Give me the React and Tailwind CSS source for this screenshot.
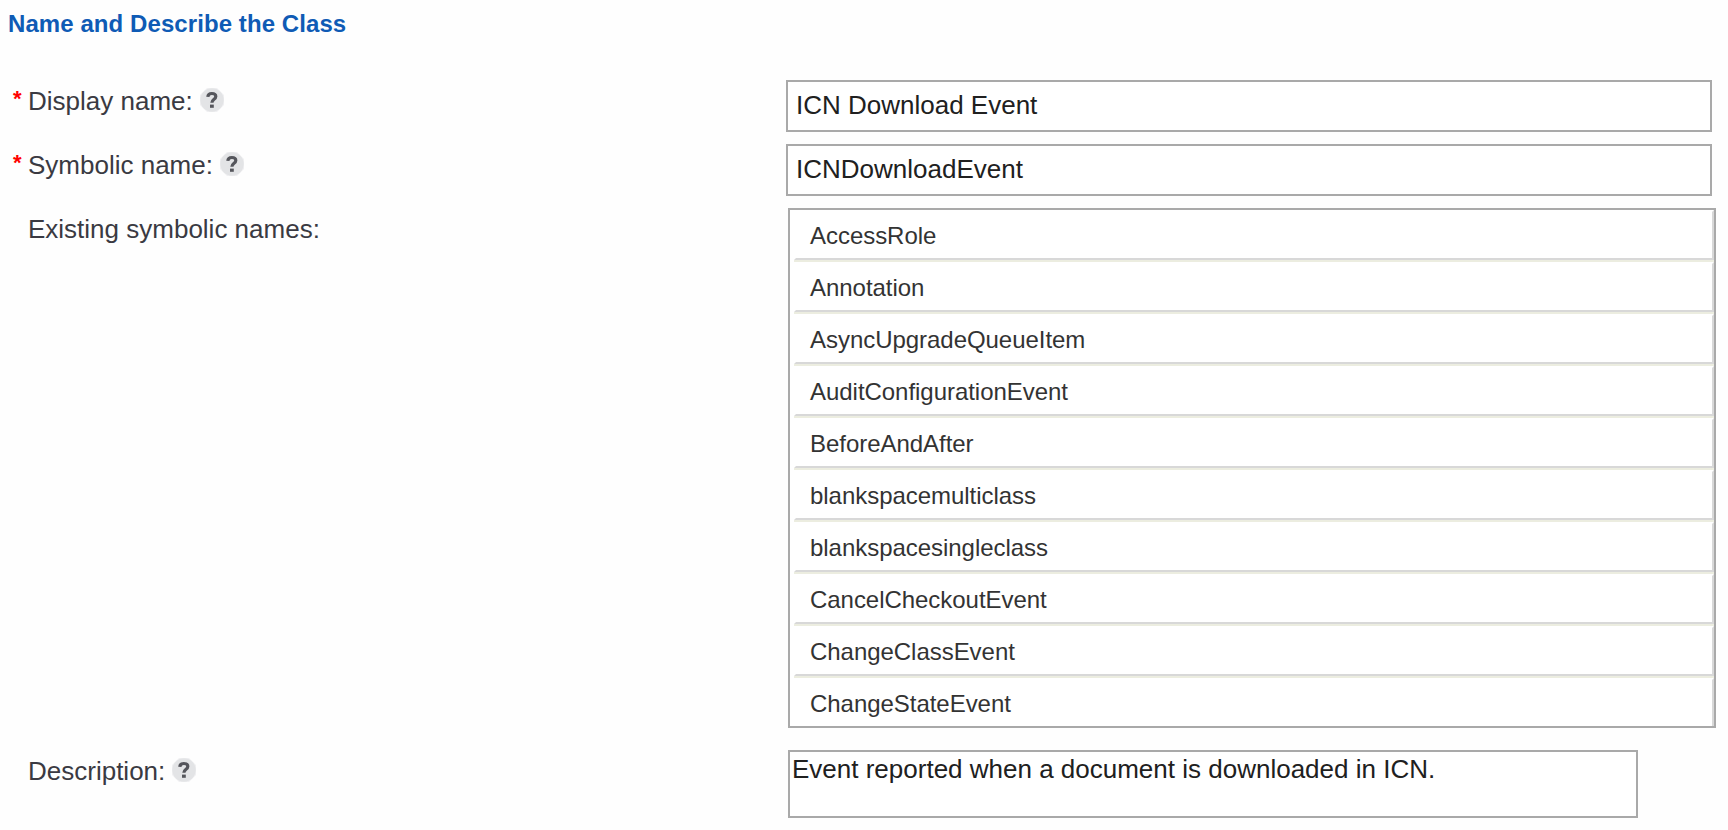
const names = [
  "AccessRole",
  "Annotation",
  "AsyncUpgradeQueueItem",
  "AuditConfigurationEvent",
  "BeforeAndAfter",
  "blankspacemulticlass",
  "blankspacesingleclass",
  "CancelCheckoutEvent",
  "ChangeClassEvent",
  "ChangeStateEvent",
];

function HelpIcon() {
  return (
    <svg viewBox="0 0 24 24" className="ml-[7px] mt-[2px] h-6 w-6 shrink-0">
      <path d="M7 0h10l7 7v10l-7 7H7l-7-7V7z" fill="#f0f0f2" />
      <circle cx="12" cy="12" r="11.700" fill="#e3e4e6" />
      <path
        d="M7.800 8.800C8 6.600 9.400 5.500 11.800 5.500c2.500 0 4 1.100 4 3 0 2.900-3.900 2.700-3.900 6.300"
        fill="none"
        stroke="#55565c"
        strokeWidth="3.200"
      />
      <rect x="10" y="16.600" width="3.800" height="3.200" fill="#55565c" />
    </svg>
  );
}

function Label({ text, required, help }) {
  return (
    <div className="flex h-[30px] w-[788px] shrink-0 items-start pl-[13px]">
      <span className="-mt-[2px] w-[15px] shrink-0 text-[22px] leading-[30px] font-bold text-[#ff0000]">{required ? "*" : ""}</span>
      <span className="whitespace-nowrap text-[26px] leading-[30px] text-[#3a3a42]">{text}</span>
      {help && <HelpIcon />}
    </div>
  );
}

function TextField({ value }) {
  return (
    <input
      readOnly
      defaultValue={value}
      className="-ml-[2px] h-[52px] w-[926px] border-2 border-[#a9a9a9] bg-white pr-2 pb-[1px] pl-2 text-[26px] text-[#202020] outline-none"
    />
  );
}

export default function App() {
  return (
    <main className="h-[830px] w-[1728px] overflow-hidden bg-[#fefefe] font-['Liberation_Sans',Arial,sans-serif]">
      <h1 className="h-20 pl-2 pt-[10px] text-[24px] leading-[28px] font-bold tracking-[0.08px] text-[#0f5bb5]">
        Name and Describe the Class
      </h1>
      <div className="flex h-16">
        <div className="pt-[6px]">
          <Label text="Display name:" required help />
        </div>
        <TextField value="ICN Download Event" />
      </div>
      <div className="flex h-16">
        <div className="pt-[6px]">
          <Label text="Symbolic name:" required help />
        </div>
        <TextField value="ICNDownloadEvent" />
      </div>
      <div className="flex h-[542px]">
        <div className="pt-[6px]">
          <Label text="Existing symbolic names:" />
        </div>
        <ul className="h-[520px] w-[928px] overflow-hidden border-2 border-[#a9a9a9] bg-white pl-1">
          {names.map((name) => (
            <li key={name} className="h-[52px] border-b-2 border-[#ecede0]">
              <div className="h-[50px] border-2 border-t-white border-r-[#d8d8d8] border-b-[#d8d8d8] border-l-white pt-[10px] pl-[14px] text-[24px] leading-[28px] tracking-[-0.04px] text-[#333333]">
                {name}
              </div>
            </li>
          ))}
        </ul>
      </div>
      <div className="flex">
        <div className="pt-[6px]">
          <Label text="Description:" help />
        </div>
        <textarea
          readOnly
          defaultValue="Event reported when a document is downloaded in ICN."
          className="h-[68px] w-[850px] resize-none overflow-hidden border-2 border-[#a9a9a9] bg-white px-[2px] pt-[2px] text-[26px] leading-[30px] text-[#202020] outline-none"
        />
      </div>
    </main>
  );
}
